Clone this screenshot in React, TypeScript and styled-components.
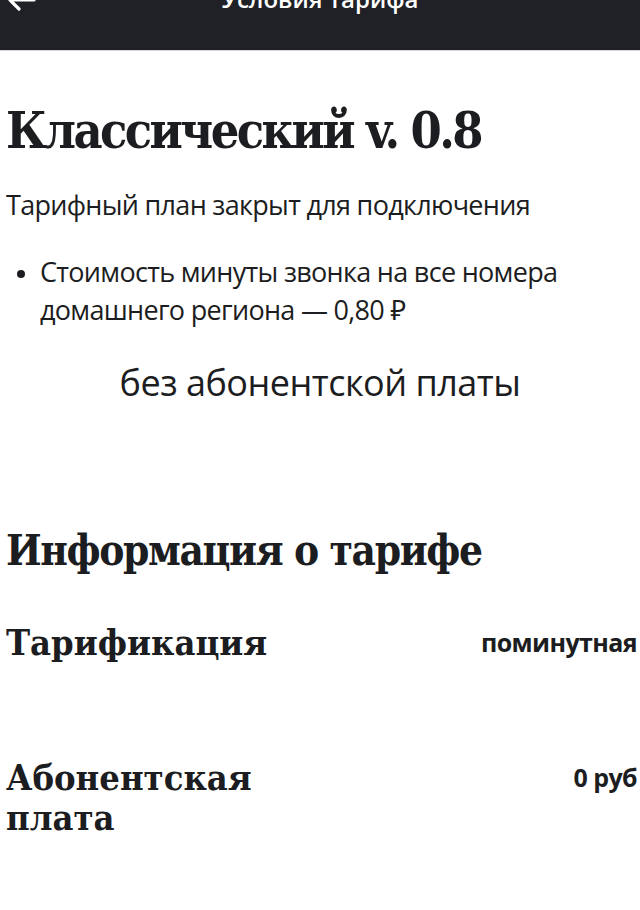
import styled, { createGlobalStyle } from "styled-components";

const Global = createGlobalStyle`
  html, body {
    margin: 0;
    padding: 0;
    background: #ffffff;
    overflow: hidden;
  }
  body {
    font-family: "Open Sans", "Noto Sans", sans-serif;
    color: #1c1d21;
  }
`;

const Header = styled.header`
  height: 50px;
  background: #1f2127;
  border-bottom: 1px solid #d9d9d9;
  display: flex;
  align-items: flex-start;
  justify-content: center;
  position: relative;
  overflow: hidden;
`;

const HeaderTitle = styled.div`
  margin-top: -17px;
  font-family: "Open Sans", sans-serif;
  font-weight: 600;
  font-size: 24px;
  line-height: 32px;
  color: #ffffff;
`;

const BackButton = styled.div`
  position: absolute;
  left: 6px;
  top: -12px;
  width: 30px;
  height: 24px;
`;

const Page = styled.main`
  padding: 0 6px;
  overflow: hidden;
`;

const slab = `"DejaVu Serif Condensed", "DejaVu Serif", serif`;

const Title = styled.h1`
  margin: 48px 0 0;
  font-family: ${slab};
  font-stretch: condensed;
  font-weight: 700;
  font-size: 50px;
  line-height: 64px;
  letter-spacing: -2.6px;
`;

const Subtitle = styled.p`
  margin: 24px 0 0;
  font-size: 27px;
  line-height: 36px;
  letter-spacing: -0.7px;
`;

const List = styled.ul`
  margin: 30px 0 0;
  padding: 0 0 0 34px;
  font-size: 27px;
  line-height: 38px;
  letter-spacing: -0.7px;
  li::marker {
    font-size: 22px;
  }
`;

const Promo = styled.div`
  margin-top: 30px;
  text-align: center;
  font-size: 36px;
  line-height: 48px;
  letter-spacing: -0.5px;
`;

const SectionTitle = styled.h2`
  margin: 118px 0 0;
  font-family: ${slab};
  font-stretch: condensed;
  font-weight: 700;
  font-size: 42px;
  line-height: 52px;
  letter-spacing: -1.4px;
`;

const Row = styled.div<{ $gap: number }>`
  display: flex;
  justify-content: space-between;
  align-items: flex-start;
  margin-top: ${(p) => p.$gap}px;
  margin-right: -3px;
`;

const RowLabel = styled.div`
  font-family: ${slab};
  font-weight: 700;
  font-size: 36px;
  line-height: 40px;
  max-width: 300px;
`;

const RowValue = styled.div`
  font-weight: 700;
  font-size: 25px;
  line-height: 32px;
  white-space: nowrap;
  letter-spacing: -0.6px;
  padding-top: 4px;
`;

export default function App() {
  return (
    <>
      <Global />
      <Header>
        <BackButton>
          <svg width="30" height="24" viewBox="0 0 30 24" fill="none">
            <path
              d="M28 12H4M13 3L4 12L13 21"
              stroke="#ffffff"
              strokeWidth="3.2"
              strokeLinecap="round"
              strokeLinejoin="round"
            />
          </svg>
        </BackButton>
        <HeaderTitle>Условия тарифа</HeaderTitle>
      </Header>
      <Page>
        <Title>Классический v. 0.8</Title>
        <Subtitle>Тарифный план закрыт для подключения</Subtitle>
        <List>
          <li>Стоимость минуты звонка на все номера домашнего региона — 0,80 ₽</li>
        </List>
        <Promo>без абонентской платы</Promo>
        <SectionTitle>Информация о тарифе</SectionTitle>
        <Row $gap={45}>
          <RowLabel>Тарификация</RowLabel>
          <RowValue>поминутная</RowValue>
        </Row>
        <Row $gap={95}>
          <RowLabel>Абонентская плата</RowLabel>
          <RowValue>0 руб</RowValue>
        </Row>
      </Page>
    </>
  );
}
